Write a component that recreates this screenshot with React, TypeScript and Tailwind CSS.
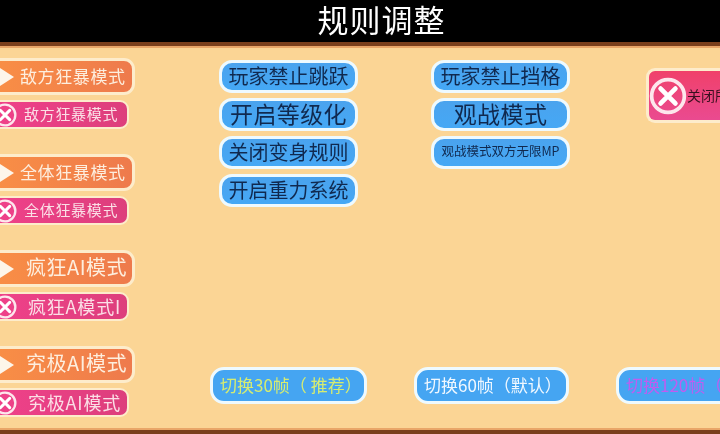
const font = "font-['Noto_Sans_CJK_SC','Noto_Sans',sans-serif]";

const modes = [
  { on: "敌方狂暴模式", off: "敌方狂暴模式", onText: "ml-[6px] text-[17px] tracking-[0.6px]", offText: "ml-[7px] text-[15px] tracking-[0.7px]" },
  { on: "全体狂暴模式", off: "全体狂暴模式", onText: "ml-[6px] text-[17px] tracking-[0.6px]", offText: "ml-[7px] text-[15px] tracking-[0.7px]" },
  { on: "疯狂AI模式", off: "疯狂A模式I", onText: "ml-[12px] text-[20px] tracking-[0.5px]", offText: "ml-[11px] text-[18px] tracking-[0.8px]" },
  { on: "究极AI模式", off: "究极AI模式", onText: "ml-[12px] text-[20px] tracking-[0.5px]", offText: "ml-[11px] text-[18px] tracking-[0.8px]" },
];

function CloseIcon({ size }: { size: number }) {
  return (
    <svg width={size} height={size} viewBox="0 0 36 36" className="shrink-0" aria-hidden>
      <circle cx="18" cy="18" r="15.5" fill="none" stroke="#fde6ec" strokeWidth="3.5" />
      <path d="M11 11 L25 25 M25 11 L11 25" stroke="#fff" strokeWidth="4.5" strokeLinecap="round" />
    </svg>
  );
}

function ModeGroup({ on, off, onText, offText }: { on: string; off: string; onText: string; offText: string }) {
  return (
    <div className="flex flex-col gap-[5px]">
      <div className="flex h-[37px] w-[146px] items-center rounded-[11px] border-[3px] border-[#fdeccb] bg-gradient-to-r from-[#f98f45] to-[#ee7a4c] pl-[8px]">
        <svg width="14" height="18" viewBox="0 0 14 18" className="shrink-0" aria-hidden>
          <path d="M0 0 L14 9 L0 18 Z" fill="#fdf6ea" />
        </svg>
        <span className={`whitespace-nowrap pb-[3px] leading-none text-[#fdeede] ${onText}`}>{on}</span>
      </div>
      <div className="flex h-[29px] w-[140px] items-center rounded-[9px] border-[2px] border-[#fdeccb] bg-gradient-to-r from-[#f0418a] to-[#dd3f7c] pl-[2px]">
        <CloseIcon size={24} />
        <span className={`whitespace-nowrap pb-[2px] leading-none text-[#fbdfe6] ${offText}`}>{off}</span>
      </div>
    </div>
  );
}

function BlueButton({ label, className }: { label: string; className: string }) {
  return (
    <div className="flex h-[33px] w-[139px] items-center justify-center rounded-[13px] border-[3px] border-[#eefaff] bg-gradient-to-b from-[#4aa3ee] to-[#45a8f5]">
      <span className={`whitespace-nowrap pb-[2px] leading-none text-[#10294f] ${className}`}>{label}</span>
    </div>
  );
}

function FpsButton({ label, width, className }: { label: string; width: string; className: string }) {
  return (
    <div className={`flex h-[37px] shrink-0 items-center overflow-hidden rounded-[14px] border-[3px] border-[#eefaff] bg-[#45a5f2] pl-[7px] ${width}`}>
      <span className={`whitespace-nowrap pb-[3px] text-[17px] leading-none ${className}`}>{label}</span>
    </div>
  );
}

export default function App() {
  return (
    <div className={`flex h-[434px] w-[720px] flex-col overflow-hidden bg-[#fbd595] blur-[0.4px] ${font}`}>
      <header className="h-[42px] shrink-0 bg-black pl-[43px] text-center text-[31px] leading-[38px] tracking-[1px] text-white">
        规则调整
      </header>
      <div className="h-[6px] shrink-0 border-b-[2px] border-[#e9a668] bg-[#7a3f1c]" />

      <main className="flex min-h-0 flex-1 pt-[10px]">
        <div className="-ml-[11px] flex w-[230px] shrink-0 flex-col gap-[25px]">
          {modes.map((m) => (
            <ModeGroup key={m.on} on={m.on} off={m.off} onText={m.onText} offText={m.offText} />
          ))}
        </div>

        <div className="flex min-w-0 flex-1 flex-col justify-between pb-[24px] pt-[2px]">
          <div className="flex">
            <div className="flex w-[212px] shrink-0 flex-col gap-[5px]">
              <BlueButton label="玩家禁止跳跃" className="text-[20px]" />
              <BlueButton label="开启等级化" className="text-[23px] tracking-[0.4px]" />
              <BlueButton label="关闭变身规则" className="text-[20px]" />
              <BlueButton label="开启重力系统" className="text-[20px]" />
            </div>
            <div className="flex w-[215px] shrink-0 flex-col gap-[5px]">
              <BlueButton label="玩家禁止挡格" className="text-[20px]" />
              <BlueButton label="观战模式" className="text-[23px] tracking-[0.4px]" />
              <BlueButton label="观战模式双方无限MP" className="text-[12.5px]" />
            </div>
            <div className="mt-[8px] flex h-[55px] w-[90px] shrink-0 items-center overflow-hidden rounded-l-[9px] border-y-[3px] border-l-[3px] border-[#fdeccb] bg-gradient-to-b from-[#f0406a] to-[#ea4a90]">
              <CloseIcon size={38} />
              <span className="whitespace-nowrap pb-[2px] text-[14px] leading-none text-[#3a1020]">关闭所有模式</span>
            </div>
          </div>

          <div className="-ml-[9px] flex gap-[47px]">
            <FpsButton label="切换30帧（ 推荐）" width="w-[157px]" className="text-[#d6ec70]" />
            <FpsButton label="切换60帧（默认）" width="w-[155px]" className="text-[#f0f8ff]" />
            <FpsButton label="切换120帧（高帧）" width="w-[120px]" className="text-[#c05cf0]" />
          </div>
        </div>
      </main>

      <div className="h-[6px] shrink-0 border-t-[2px] border-[#e9a668] bg-[#7a3f1c]" />
    </div>
  );
}
